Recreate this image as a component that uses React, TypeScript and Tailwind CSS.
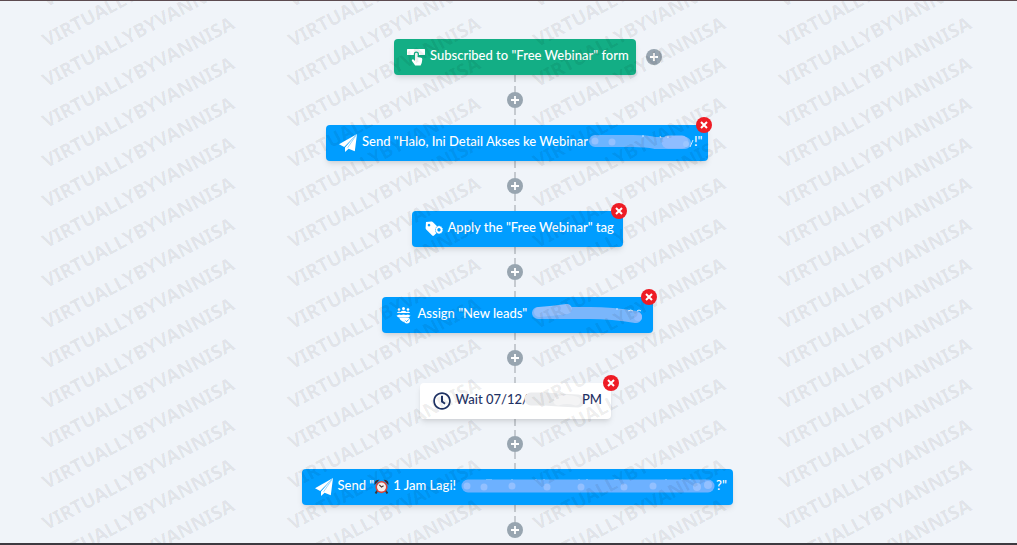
import { Fragment } from "react";
import type { ReactNode } from "react";
import { FaRegClock } from "react-icons/fa";

function FormIcon() {
  return (
    <svg viewBox="0 0 18 17" className="h-[17px] w-[18px]" fill="currentColor" aria-hidden>
      <path d="M.6 0h16.8q.6 0 .6.6v4.8q0 .6-.6.6H12V5a2.600 2.600 0 0 0-5.200 0v1H.6Q0 6 0 5.400V.6Q0 0 .6 0Z" />
      <path d="M8 5a1.300 1.300 0 0 1 2.600 0v3l3.600.8q1.200.3 1.100 1.600l-.6 3.600-1.100 2.400H8.200L5 12q-.6-1 .3-1.500.8-.4 1.500.3L8 12Z" />
    </svg>
  );
}

function PlaneIcon() {
  return (
    <svg viewBox="0 0 18 18" className="size-[18px]" fill="currentColor" aria-hidden>
      <path d="M18 0 0 10.200l5.200 2.800Z" />
      <path d="M18 0 6 13.400V18l3.600-3.200 6.200 2.400Z" />
      <path d="M17 1.500 8.600 13.800" stroke="#009dff" strokeWidth=".4" />
    </svg>
  );
}

function TagIcon() {
  return (
    <svg viewBox="0 0 18 16" className="h-4 w-[18px]" fill="currentColor" aria-hidden>
      <path
        fillRule="evenodd"
        d="M1 1 6.500.600Q7.400.600 8 1.200l4 4a4.800 4.800 0 0 0-.7 7L9 14.600q-.9.800-1.800 0L1.200 8.500Q.6 7.900.6 7ZM4 2.800a1.300 1.300 0 1 0 .01 0Z"
      />
      <path
        fillRule="evenodd"
        d="m14 4.600 1 .900 1.400-.1.300 1.400 1.200.8-.6 1.200.6 1.300-1.200.8-.3 1.400-1.400-.1-1 .9-1-.9-1.200.1-.4-1.400-1.200-.8.600-1.300-.6-1.200 1.200-.8.400-1.400 1.200.1Zm0 2.500a1.700 1.700 0 1 0 .01 0Z"
      />
    </svg>
  );
}

function LeadsIcon() {
  return (
    <svg viewBox="0 0 16 17" className="h-[17px] w-4" fill="currentColor" aria-hidden>
      <circle cx="3" cy="2.500" r="1.300" />
      <circle cx="7.500" cy="1.600" r="1.500" />
      <circle cx="12" cy="2.500" r="1.300" />
      <path d="M1 6Q1.200 4.400 3 4.400q.9 0 1.400.5Q5.500 3.700 7.500 3.700t3.100 1.200q.5-.5 1.400-.5 1.800 0 2 1.600Z" />
      <path d="M.5 8.700 3 7.600l2 .5 2.500-.6 2.500.6 2-.5 2.500 1.100-1.700 1.600H2.200Z" />
      <path d="M3 10.600h7L8 13.600l-.3 1.600L4.500 13Z" />
      <circle cx="11" cy="13.500" r="3" />
      <path d="m9.500 13.500 1.100 1.200 2-2.200" fill="none" stroke="#009dff" strokeWidth=".9" />
    </svg>
  );
}

function AlarmClock() {
  return (
    <svg viewBox="0 0 14 14" className="size-[15px]" role="img" aria-label="Alarm clock">
      <path d="m3 11-1.500 2.500M11 11l1.500 2.500" stroke="#3b3434" strokeWidth="1.800" />
      <path d="M.6 5.500Q-.2 1 5 .7ZM13.400 5.500Q14.200 1 9 .7Z" fill="#3b2a2d" />
      <circle cx="7" cy="7.500" r="5.700" fill="#d8453b" />
      <circle cx="7" cy="7.500" r="4.200" fill="#f5efed" />
      <path d="m5 5.400 2 2.100 1.900-1.200" fill="none" stroke="#4a3434" strokeWidth="1" />
    </svg>
  );
}

/** Marker strokes that hide private words of a step label. */
function SmudgeWebinar() {
  return (
    <svg viewBox="0 0 108 16" className="-mr-0.5 h-4 w-[108px] shrink-0" aria-hidden>
      <path
        d="M7 7h38q14 0 22 2h30"
        fill="none"
        stroke="#6db5ff"
        strokeWidth="12"
        strokeLinecap="round"
      />
      <path d="M80 8h14" stroke="#8fbdff" strokeWidth="13" strokeLinecap="round" />
      <circle cx="7" cy="7" r="3.500" fill="#93c1ff" />
      <circle cx="24" cy="8" r="3.500" fill="#93c1ff" />
      <circle cx="98" cy="10" r="3" fill="#9cc6ff" />
      <path d="M55 3V1M72 2l1 2M80 2v2M105 6l-3 7" stroke="#d5eaff" strokeWidth="1" fill="none" />
    </svg>
  );
}

function SmudgeLeads() {
  return (
    <svg viewBox="0 0 114 20" className="h-5 w-[114px] shrink-0" aria-hidden>
      <path
        d="M7 9h52q22 0 46 4"
        fill="none"
        stroke="#7ab6fb"
        strokeWidth="12"
        strokeLinecap="round"
      />
      <path d="M8 8q14-1 28-3" stroke="#93bffc" strokeWidth="10" strokeLinecap="round" fill="none" />
      <path d="M86 6V4M97 7q3-2 5 0M106 7q2-2 4 0" stroke="#d5eaff" strokeWidth="1" fill="none" />
      <circle cx="107" cy="13" r="4" fill="#8fbdff" />
    </svg>
  );
}

function SmudgeDate() {
  return (
    <svg viewBox="0 0 62 18" className="-mx-1 h-[18px] w-[62px] shrink-0" aria-hidden>
      <path
        d="M7 8h14q12 1 33 2"
        fill="none"
        stroke="#ebecee"
        strokeWidth="13"
        strokeLinecap="round"
      />
      <path d="M34 10q9-3 18 0" stroke="#f4f4f5" strokeWidth="9" strokeLinecap="round" fill="none" />
    </svg>
  );
}

function SmudgeReminder() {
  return (
    <svg viewBox="0 0 256 16" className="h-4 w-[256px] shrink-0" aria-hidden>
      <path
        d="M26 2h6M52 3V1M76 3V1M84 3V1M119 3V1M127 3V1M154 2h5M206 3v-2M222 3V1M230 3V1"
        stroke="#cce7ff"
        strokeWidth="1"
      />
      <path d="M8 8h240" stroke="#6db1ff" strokeWidth="13" strokeLinecap="round" />
      <g fill="#93c0ff">
        <circle cx="7" cy="8" r="3.500" />
        <circle cx="24" cy="9" r="3.500" />
        <circle cx="52" cy="8" r="3.500" />
        <circle cx="87" cy="9" r="3.500" />
        <circle cx="121" cy="9" r="3.500" />
        <circle cx="164" cy="9" r="3.500" />
        <circle cx="193" cy="8" r="3.500" />
        <circle cx="237" cy="9" r="4" />
        <circle cx="248" cy="7" r="4" />
      </g>
    </svg>
  );
}

type Step = {
  id: string;
  icon: ReactNode;
  label: ReactNode;
  // box width and colours
  className: string;
  removable: boolean;
};

const BLUE = "ml-1 bg-[#009dff] text-white";

const steps: Step[] = [
  {
    id: "form",
    icon: <FormIcon />,
    label: <span>Subscribed to "Free Webinar" form</span>,
    className: "w-[242px] bg-[#13ae85] text-white",
    removable: false,
  },
  {
    id: "welcome",
    icon: <PlaneIcon />,
    label: (
      <>
        <span>Send "Halo, Ini Detail Akses ke Webinar</span>
        <SmudgeWebinar />
        <span>!"</span>
      </>
    ),
    className: `w-[382px] ${BLUE}`,
    removable: true,
  },
  {
    id: "tag",
    icon: <TagIcon />,
    label: <span>Apply the "Free Webinar" tag</span>,
    className: `w-[211px] ${BLUE}`,
    removable: true,
  },
  {
    id: "leads",
    icon: <LeadsIcon />,
    label: (
      <>
        <span className="pr-1">Assign "New leads"</span>
        <SmudgeLeads />
      </>
    ),
    className: `w-[271px] ${BLUE}`,
    removable: true,
  },
  {
    id: "wait",
    icon: <FaRegClock className="size-[18px]" aria-hidden />,
    label: (
      <>
        <span>Wait 07/12/</span>
        <SmudgeDate />
        <span>PM</span>
      </>
    ),
    className: "w-[191px] bg-white text-[#1f3264]",
    removable: true,
  },
  {
    id: "reminder",
    icon: <PlaneIcon />,
    label: (
      <>
        <span>Send "</span>
        <AlarmClock />
        <span className="px-1">1 Jam Lagi!</span>
        <SmudgeReminder />
        <span>?"</span>
      </>
    ),
    className: `w-[431px] ${BLUE}`,
    removable: false,
  },
];

function AddButton({ label }: { label: string }) {
  return (
    <button
      type="button"
      aria-label={label}
      className="flex size-4 items-center justify-center rounded-full bg-[#98a5b0] text-white"
    >
      <svg viewBox="0 0 8 8" className="size-2" aria-hidden>
        <path d="M4 0v8M0 4h8" stroke="currentColor" strokeWidth="1.800" />
      </svg>
    </button>
  );
}

function Dash() {
  return (
    <div className="h-[17px] w-0.5 bg-[repeating-linear-gradient(to_bottom,#c5cad0_0_7px,transparent_7px_11px)]" />
  );
}

function StepCard({ step }: { step: Step }) {
  return (
    <div
      className={`relative flex h-9 items-center rounded pl-[13px] text-[13px] font-medium shadow-md ${step.className}`}
    >
      <span className="flex w-[18px] shrink-0 justify-center">{step.icon}</span>
      <div className="flex items-center pb-0.5 pl-[5px] whitespace-nowrap">{step.label}</div>
      {step.removable && (
        <button
          type="button"
          aria-label="Remove step"
          className={`absolute -top-2 z-20 flex size-4 items-center justify-center rounded-full bg-[#ee1c25] text-white ${
            step.id === "wait" ? "-right-2" : "-right-1"
          }`}
        >
          <svg viewBox="0 0 8 8" className="size-2" aria-hidden>
            <path d="m1 1 6 6M7 1 1 7" stroke="currentColor" strokeWidth="2" />
          </svg>
        </button>
      )}
      {step.id === "form" && (
        <div className="absolute -right-[26px]">
          <AddButton label="Add trigger" />
        </div>
      )}
    </div>
  );
}

function Watermark() {
  return (
    <div
      aria-hidden
      className="pointer-events-none absolute -top-[70px] right-[19px] -bottom-[31px] left-[15px] z-10 grid auto-rows-fr grid-cols-4 text-black/8 select-none"
    >
      {Array.from({ length: 64 }, (_, i) => (
        <div key={i} className="flex h-full min-h-0 items-center justify-center">
          <span className="-rotate-28 font-['Noto_Sans',sans-serif] text-[19px] leading-5 font-bold">
            VIRTUALLYBYVANNISA
          </span>
        </div>
      ))}
    </div>
  );
}

export default function App() {
  return (
    <main className="relative min-h-screen overflow-hidden border-t border-b-2 border-t-[#5c4b50] border-b-[#3d3a40] bg-[#f0f4f9] font-['Lato',sans-serif]">
      <div className="flex flex-col items-center pt-[38px] pl-[13px]">
        {steps.map((step, i) => (
          <Fragment key={step.id}>
            <StepCard step={step} />
            <Dash />
            <AddButton label="Add step" />
            {i < steps.length - 1 && <Dash />}
          </Fragment>
        ))}
      </div>
      <Watermark />
    </main>
  );
}
